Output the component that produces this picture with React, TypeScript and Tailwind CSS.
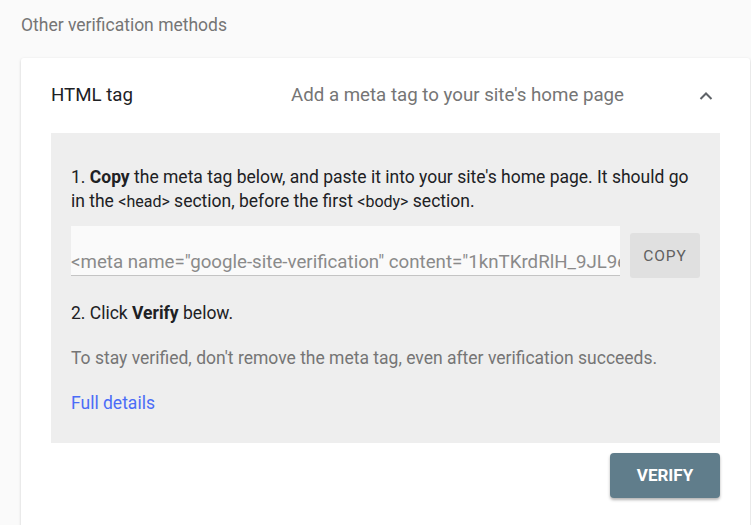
import * as React from "react";

const metaTag =
  '<meta name="google-site-verification" content="1knTKrdRlH_9JL9eXq0c3vLwZp8yT2mNfGhQ4sD7aBc" />';

export default function App() {
  return (
    <div className="min-h-[525px] w-[751px] overflow-hidden bg-[#fafafa] font-['Roboto','Liberation_Sans',sans-serif]">
      {/* Section title */}
      <div className="pl-[21px] pt-[14px] text-[17.5px] leading-[22px] text-[#757575]">
        Other verification methods
      </div>

      {/* Card */}
      <div className="ml-[21px] mt-[22px] w-[729px] rounded-[3px] bg-white pb-[40px] shadow-[0_1px_3px_rgba(0,0,0,0.18)]">
        {/* Header */}
        <div className="flex h-[75px] items-center pl-[30px] pr-[37px]">
          <div className="w-[240px] text-[18.7px] text-[#202124]">HTML tag</div>
          <div className="flex-1 text-[18.7px] text-[#757575]">
            Add a meta tag to your site's home page
          </div>
          <svg width="14" height="9" viewBox="0 0 14 9" className="shrink-0">
            <path
              d="M1.5 8 L7 2.5 L12.5 8"
              fill="none"
              stroke="#5f6368"
              strokeWidth="2"
            />
          </svg>
        </div>

        {/* Expanded content */}
        <div className="ml-[30px] w-[669px] bg-[#eeeeee] px-[20px] pb-[28px] pt-[32px] text-[17.5px] leading-[24px]">
          <p className="m-0 text-[#202124]">
            1. <span className="font-bold">Copy</span> the meta tag below, and
            paste it into your site's home page. It should go in the{" "}
            <span className="text-[16px]">&lt;head&gt;</span> section, before the
            first <span className="text-[16px]">&lt;body&gt;</span> section.
          </p>

          <div className="mt-[12px] flex items-start gap-[10px]">
            <div className="flex h-[50px] w-[549px] shrink-0 items-end overflow-hidden whitespace-nowrap border-b border-[#c4c4c4] bg-[#fafafa] pb-[1px] text-[18.7px] leading-[24px] text-[#8a8a8a]">
              {metaTag}
            </div>
            <button
              type="button"
              className="mt-[7px] h-[45px] w-[70px] shrink-0 rounded-[3px] bg-[#e0e0e0] text-[15.5px] tracking-[0.06em] text-[#616161]"
            >
              COPY
            </button>
          </div>

          <p className="m-0 mt-[23px] text-[#202124]">
            2. Click <span className="font-bold">Verify</span> below.
          </p>

          <p className="m-0 mt-[21px] text-[#757575]">
            To stay verified, don't remove the meta tag, even after verification
            succeeds.
          </p>

          <a href="#" className="mt-[21px] block text-[#4a6cf7]">
            Full details
          </a>
        </div>

        {/* Footer */}
        <div className="flex justify-end pr-[30px] pt-[10px]">
          <button
            type="button"
            className="h-[45px] w-[110px] rounded-[4px] bg-[#607d8b] text-[17px] font-bold text-white shadow-[0_2px_3px_rgba(0,0,0,0.3)]"
          >
            VERIFY
          </button>
        </div>
      </div>
    </div>
  );
}
